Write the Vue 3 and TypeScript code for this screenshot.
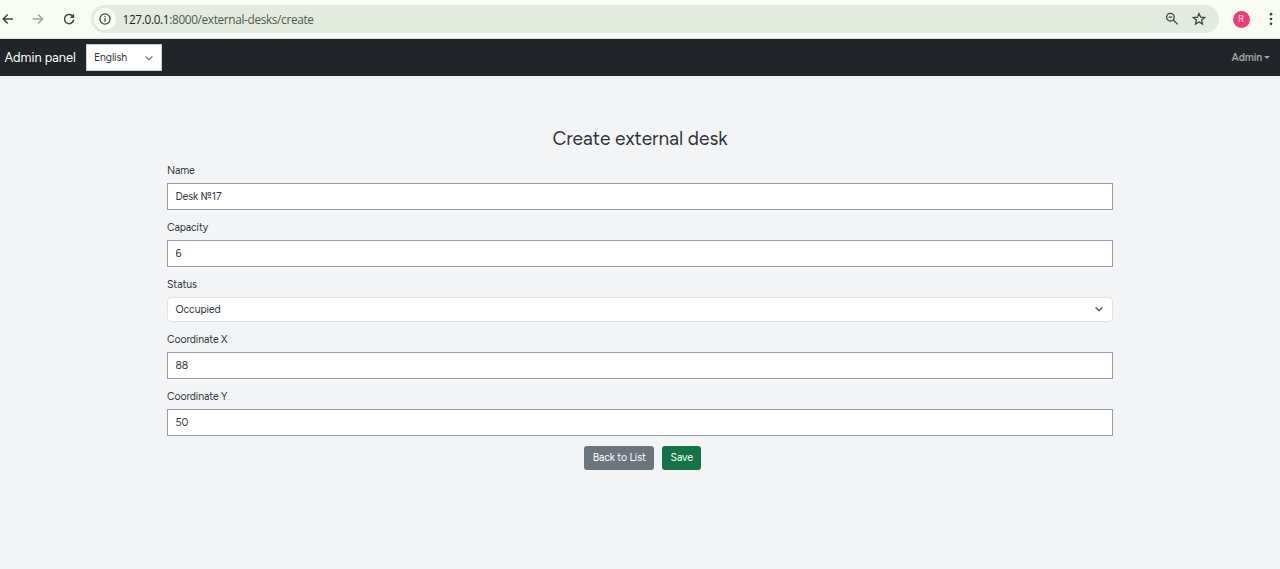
<script setup lang="ts">
import { ref } from 'vue'

interface Field {
  id: string
  label: string
  value: string
  kind: 'text' | 'select'
}

const fields = ref<Field[]>([
  { id: 'name', label: 'Name', value: 'Desk №17', kind: 'text' },
  { id: 'capacity', label: 'Capacity', value: '6', kind: 'text' },
  { id: 'status', label: 'Status', value: 'Occupied', kind: 'select' },
  { id: 'coord-x', label: 'Coordinate X', value: '88', kind: 'text' },
  { id: 'coord-y', label: 'Coordinate Y', value: '50', kind: 'text' },
])
</script>

<template>
  <div class="window">
    <header class="toolbar">
      <svg class="tool back" viewBox="0 0 14 14"><path d="M13 7H3.2M7.7 2.5 3.2 7l4.5 4.5" /></svg>
      <svg class="tool forward" viewBox="0 0 14 14"><path d="M1.8 7h9.8M7.1 2.5 11.6 7l-4.5 4.5" /></svg>
      <svg class="tool reload" viewBox="0 0 14 14">
        <path d="M11.7 7.6A4.6 4.6 0 1 1 10.2 3.6L11.4 4.8" />
        <path class="solid" d="M12.2 1.5v4.6H7.7z" />
      </svg>
      <div class="omnibox">
        <span class="site-info">
          <svg viewBox="0 0 14 14"><circle cx="7" cy="7" r="5.1" /><path d="M7 6.3v3.5M7 4v1.2" /></svg>
        </span>
        <span class="url"><b>127.0.0.1</b>:8000/external-desks/create</span>
        <svg class="zoom" viewBox="0 0 14 14"><circle cx="5.4" cy="5.2" r="3.8" /><path d="M8.2 8 12.7 12.4M3.6 5.2h3.6" /></svg>
        <svg class="star" viewBox="0 0 14 14"><path d="M7 1.6 8.6 5.2l4 .4-3 2.6.9 3.9L7 10l-3.5 2.1.9-3.9-3-2.6 4-.4z" /></svg>
      </div>
      <span class="avatar">R</span>
      <svg class="menu" viewBox="0 0 4 14"><circle cx="2" cy="2.2" r="1.35" /><circle cx="2" cy="7" r="1.35" /><circle cx="2" cy="11.8" r="1.35" /></svg>
    </header>

    <nav class="navbar">
      <span class="brand">Admin panel</span>
      <button class="language" type="button">
        <span>English</span>
        <svg class="chevron" viewBox="0 0 10 10"><path d="M1.6 3.3 5 6.7l3.4-3.4" /></svg>
      </button>
      <span class="account">Admin<i class="caret"></i></span>
    </nav>

    <main class="content">
      <h1>Create external desk</h1>
      <form @submit.prevent>
        <div v-for="field in fields" :key="field.id" class="field" :class="field.id">
          <label :for="field.id">{{ field.label }}</label>
          <input v-if="field.kind === 'text'" :id="field.id" v-model="field.value" type="text" />
          <button v-else :id="field.id" class="select" type="button">
            <span>{{ field.value }}</span>
            <svg class="chevron" viewBox="0 0 10 10"><path d="M1.6 3.3 5 6.7l3.4-3.4" /></svg>
          </button>
        </div>
        <div class="actions">
          <button type="button" class="btn secondary">Back to List</button>
          <button type="submit" class="btn success">Save</button>
        </div>
      </form>
    </main>
  </div>
</template>

<style>
body {
  margin: 0;
  background: #f3f4f6;
  overflow: hidden;
}
</style>

<style scoped>
* {
  box-sizing: border-box;
}
.window {
  height: 569px;
  background: #f3f4f6;
  color: #30353a;
  font: 10.5px/16px Figtree, Inter, "Noto Sans", sans-serif;
  letter-spacing: -0.12px;
}
svg {
  display: block;
  flex: none;
  fill: none;
  stroke: #3c483c;
  stroke-width: 1.5;
}
.toolbar {
  display: flex;
  align-items: center;
  height: 39px;
  background: #f8fcf2;
  border-bottom: 1px solid #dce1d8;
}
.tool {
  width: 14px;
  height: 14px;
}
.forward {
  margin-left: 17px;
  stroke: #9da49a;
}
.reload {
  margin-left: 17px;
}
.solid {
  fill: #3c483c;
  stroke: none;
}
.omnibox {
  display: flex;
  align-items: center;
  width: 1128px;
  height: 28px;
  margin-left: 15px;
  padding: 0 13px 0 3px;
  border-radius: 14px;
  background: #e3ebde;
}
.site-info {
  display: grid;
  place-items: center;
  width: 22px;
  height: 22px;
  border-radius: 50%;
  background: #f8fcf2;
}
.site-info svg {
  width: 14px;
  height: 14px;
  stroke-width: 1.3;
}
.url {
  margin: 0 auto 0 6.5px;
  color: #50594f;
  font: 11.8px/18px "Open Sans", "Noto Sans", sans-serif;
  letter-spacing: -0.34px;
  white-space: nowrap;
}
.url b {
  color: #20271f;
  font-weight: 400;
}
.zoom,
.star {
  width: 14px;
  height: 14px;
  stroke-width: 1.3;
}
.star {
  margin-left: 13px;
}
.avatar {
  width: 17px;
  height: 17px;
  margin-left: 13.5px;
  border-radius: 50%;
  background: #ec3d78;
  color: #fde4ed;
  font: 9px/17px Roboto, sans-serif;
  text-align: center;
}
.menu {
  width: 4px;
  height: 14px;
  margin-left: 19.5px;
  fill: #3c483c;
  stroke: none;
}
.navbar {
  display: flex;
  align-items: center;
  height: 37px;
  padding: 0 10px 0 4.5px;
  background: #212529;
}
.brand {
  width: 81px;
  color: #fff;
  font-size: 12.8px;
  letter-spacing: 0;
  white-space: nowrap;
}
button {
  font: inherit;
  letter-spacing: inherit;
}
.chevron {
  width: 10px;
  height: 10px;
  stroke: #6b7280;
  stroke-width: 1.2;
}
.language {
  display: flex;
  align-items: center;
  justify-content: space-between;
  width: 76.5px;
  height: 27px;
  padding: 0 7px 0 7.5px;
  border: 1px solid #cbd0d8;
  background: #fff;
  color: #30353a;
}
.account {
  display: flex;
  align-items: center;
  gap: 2px;
  margin-left: auto;
  color: #a1a5a9;
  font-weight: 600;
}
.caret {
  border: 3px solid transparent;
  border-top-color: currentColor;
  border-bottom: 0;
}
.content {
  width: 946px;
  margin: 0 auto;
  padding-top: 50px;
}
h1 {
  margin: 0;
  font-size: 19.1px;
  line-height: 25px;
  font-weight: 400;
  letter-spacing: 0;
  text-align: center;
}
form {
  padding-top: 11px;
}
.field {
  height: 57px;
}
.field.status {
  height: 55px;
}
.field.name {
  height: 57.5px;
}
.field.capacity {
  height: 56.5px;
}
label {
  display: block;
  height: 20.5px;
  padding-top: 0.5px;
}
input {
  display: block;
  width: 100%;
  height: 27px;
  padding: 0 7.5px;
  border: 1px solid #979da9;
  border-radius: 0;
  background: #fff;
  color: #30353a;
  font: inherit;
  letter-spacing: inherit;
  outline: none;
}
.select {
  display: flex;
  align-items: center;
  justify-content: space-between;
  width: 100%;
  height: 25px;
  padding: 0 8px 0 7.5px;
  border: 1px solid #dee2e6;
  border-radius: 4px;
  background: #fff;
  color: #30353a;
}
.select span {
  padding-top: 1px;
}
.select .chevron {
  stroke: #596069;
  stroke-width: 1.5;
}
.actions {
  display: flex;
  justify-content: center;
  gap: 8px;
  padding: 0.5px 0 0 5.5px;
}
.btn {
  height: 24.5px;
  padding: 0;
  border: 0;
  border-radius: 3px;
  color: #fff;
}
.secondary {
  width: 70px;
  background: #6c757d;
}
.success {
  width: 39px;
  background: #157347;
}
</style>
